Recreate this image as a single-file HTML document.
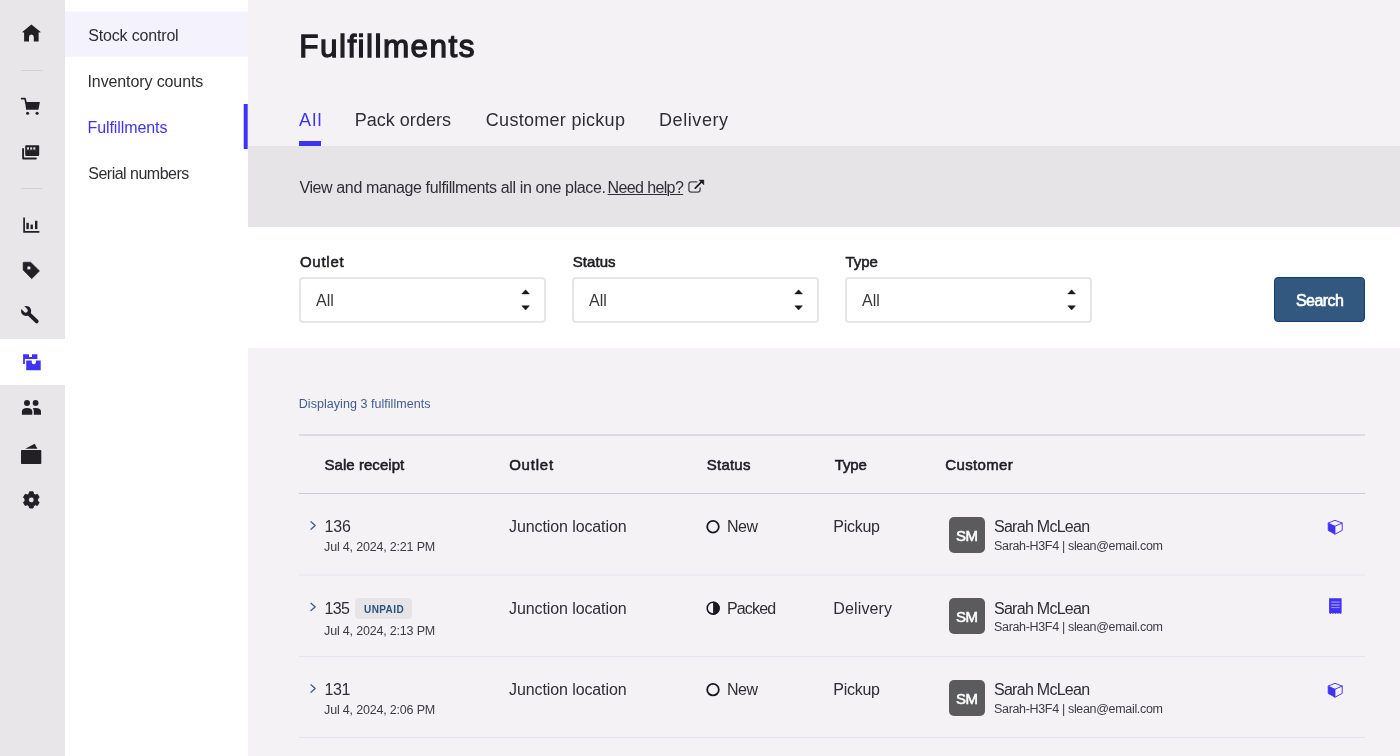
<!DOCTYPE html>
<html lang="en">
<head>
<meta charset="utf-8">
<title>Fulfillments</title>
<style>
*{box-sizing:border-box;margin:0;padding:0}
html,body{width:1400px;height:756px;overflow:hidden;background:#f4f2f5}
body{font-family:"Liberation Sans",sans-serif;color:#302e33;font-size:16px;position:relative}
.t{position:absolute;white-space:nowrap;display:block}
.n16{font-size:16px;line-height:20px}
.n18{font-size:18px;line-height:22px}
.n13{font-size:12.5px;line-height:16px}
.b15{font-size:15px;line-height:20px;color:#1e1c21;-webkit-text-stroke:0.55px #1e1c21}
.b16{font-size:16px;line-height:20px;color:#fff;-webkit-text-stroke:0.6px #fff}
.b15w{font-size:15px;line-height:20px;color:#fff;-webkit-text-stroke:0.55px #fff}
.b10{font-size:10px;line-height:12px;font-weight:bold}
.h1{font-size:31.5px;line-height:40px;font-weight:normal;color:#1e1c21;-webkit-text-stroke:1.3px #1e1c21}
svg{position:absolute;left:0;top:0;overflow:visible}
#rail{position:absolute;left:0;top:0;width:65px;height:756px;background:#e8e6e9}
#rail .sep{position:absolute;left:21px;width:21px;height:1px;background:#d2d0d4}
#rail .act{position:absolute;left:0;top:339px;width:65px;height:46px;background:#fff}
#nav{position:absolute;left:65px;top:0;width:183px;height:756px;background:#fff;will-change:transform}
#nav .hl{position:absolute;left:0;top:0;width:183px;height:45.4px;background:#f3f2fd;transform:translateY(11.6px)}
#nav .bar{position:absolute;left:0;top:104px;width:3.8px;height:45px;background:#3f32f5;transform:translateX(178.7px)}
#main{position:absolute;left:248px;top:0;width:1152px;height:756px;background:#f4f2f5;will-change:transform}
#tabline{position:absolute;left:51px;top:141px;width:22px;height:5px;background:#3f32f5}
#band{position:absolute;left:0;top:146px;width:1152px;height:81px;background:#e6e4e7}
#filters{position:absolute;left:0;top:227px;width:1152px;height:121px;background:#fff}
.sel{position:absolute;top:277px;width:247px;height:46px;border:2px solid #e7e5e9;border-radius:4px;background:#fff}
#search{position:absolute;left:1026px;top:277px;width:91px;height:45px;border-radius:4px;background:#335880;border:1px solid #123b72}
.hr{position:absolute;left:51px;width:1066px;height:1px;background:#cbc9cd}
.av{position:absolute;left:701px;width:36px;height:36px;border-radius:5px;background:#5b5a5c}
.badge{position:absolute;left:107px;top:598.4px;width:56.5px;height:20.3px;border-radius:4px;background:#e6e4e7}
u{text-decoration:underline;text-underline-offset:0.5px;text-decoration-thickness:1px}
</style>
</head>
<body>
<div id="rail">
<div class="sep" style="top:70px"></div>
<div class="sep" style="top:188px"></div>
<div class="act"></div>
<svg width="65" height="756" viewBox="0 0 65 756">
<g fill="#222025" stroke="none">
<path d="M31.4 24.6 L41 32.3 L38.6 32.6 V41.5 H33.8 V37 A2.4 2.5 0 0 0 29 37 V41.5 H24.1 V32.6 L21.9 32.3 Z"/>
<path d="M25.1 101.9 H39.9 L38.4 109.8 H26.1 Z"/>
<path d="M21.6 98.6 H25 L26 103" fill="none" stroke="#222025" stroke-width="1.7" stroke-linecap="round" stroke-linejoin="round"/>
<circle cx="27.6" cy="113.3" r="1.55"/><circle cx="37.1" cy="113.3" r="1.55"/>
<path d="M23.1 148.9 V158.5 H35.9" fill="none" stroke="#222025" stroke-width="1.9" stroke-linecap="round" stroke-linejoin="round"/>
<rect x="25.2" y="145.2" width="14" height="10.7" rx="0.8"/>
<g fill="#d9d7db"><rect x="26.9" y="147.3" width="2.1" height="2.3"/><rect x="30.1" y="147.3" width="2.1" height="2.3"/><rect x="33.3" y="147.3" width="2.1" height="2.3"/></g>
<rect x="26.6" y="150.3" width="10.4" height="0.5" fill="#3c3a3f"/>
<path d="M24.1 217.6 V231.8 H39.4" fill="none" stroke="#222025" stroke-width="1.7" stroke-linecap="butt" stroke-linejoin="miter"/>
<rect x="26.4" y="222.8" width="2.4" height="6.3"/><rect x="30.5" y="224.6" width="2.4" height="4.5"/><rect x="35" y="220.8" width="2.4" height="8.3"/>
<path fill-rule="evenodd" d="M23.5 262.2 H30.6 L39.5 270.9 L31.7 278.7 L23.1 270 V262.6 Z M28.9 265.95 a1.95 1.95 0 1 0 0.01 0 Z" stroke="#222025" stroke-width="0.6" stroke-linejoin="round"/>
<path fill-rule="evenodd" d="M26.1 305.9 a5.05 5.05 0 1 1 -0.01 0 Z" />
<path d="M36.7 321.4 L28.6 313.6" fill="none" stroke="#222025" stroke-width="3.9" stroke-linecap="round"/>
<path d="M25.7 310.5 L20.5 305.3" fill="none" stroke="#e8e6e9" stroke-width="4.1" stroke-linecap="round"/>
</g>
<g fill="#3f32f5">
<path d="M23.1 354.2 H29 V356.9 H32 V354.2 H37.4 V359 H24.9 V364.1 H23.1 Z"/>
<path d="M26.2 360.4 H31.7 V362.2 A2.1 2.1 0 0 0 35.9 362.2 V360.4 H40.7 V370.3 H26.2 Z"/>
</g>
<g fill="#222025">
<circle cx="27" cy="402.9" r="3"/><circle cx="35.6" cy="402.9" r="2.9"/>
<path d="M21.9 414.8 V411.6 Q21.9 407.9 27.1 407.9 Q32.3 407.9 32.3 411.6 V414.8 Z"/>
<path d="M33.8 414.8 V411.3 Q33.8 409.5 32.8 408.2 Q34 407.9 35.6 407.9 Q41 407.9 41 411.6 V414.8 Z"/>
<rect x="21" y="450" width="20.3" height="14" rx="0.8"/>
<path d="M25.2 448.7 L34.7 443.7 L37.4 448.7 Z"/>
<path fill-rule="evenodd" d="M33.59 493.93 L33.03 491.78 L29.57 491.78 L29.01 493.93 L27.27 494.93 L25.13 494.35 L23.41 497.34 L24.98 498.90 L24.98 500.90 L23.41 502.46 L25.13 505.45 L27.27 504.87 L29.01 505.87 L29.57 508.02 L33.03 508.02 L33.59 505.87 L35.33 504.87 L37.47 505.45 L39.19 502.46 L37.62 500.90 L37.62 498.90 L39.19 497.34 L37.47 494.35 L35.33 494.93Z M31.3 497.1 a2.8 2.8 0 1 0 0.01 0 Z" stroke="#222025" stroke-width="0.9" stroke-linejoin="round"/>
</g>
</svg>
</div>
<div id="nav">
<div class="hl"></div>
<div class="bar"></div>
<div class="t n16" style="left:23.30px;top:26.00px;letter-spacing:-0.177px;">Stock control</div>
<div class="t n16" style="left:22.50px;top:72.00px;letter-spacing:-0.107px;">Inventory counts</div>
<div class="t n16" style="left:22.50px;top:118.00px;letter-spacing:-0.091px;color:#3f32f5">Fulfillments</div>
<div class="t n16" style="left:23.30px;top:164.00px;letter-spacing:-0.508px;">Serial numbers</div>
</div>
<div id="main">
<h1 class="t h1" style="left:51.35px;top:26.40px;letter-spacing:1.433px;">Fulfillments</h1>
<div class="t n18" style="left:51.00px;top:109.00px;letter-spacing:1.198px;color:#3f32f5">All</div>
<div class="t n18" style="left:106.70px;top:109.00px;letter-spacing:0.026px;">Pack orders</div>
<div class="t n18" style="left:237.80px;top:109.00px;letter-spacing:0.290px;">Customer pickup</div>
<div class="t n18" style="left:411.00px;top:109.00px;letter-spacing:0.584px;">Delivery</div>
<div id="tabline"></div>
<div id="band"></div>
<div class="t n16" style="left:51.40px;top:178.00px;letter-spacing:-0.376px;">View and manage fulfillments all in one place.</div>
<u class="t n16" style="left:359.60px;top:178.00px;letter-spacing:-0.627px;">Need help?</u>
<div id="filters"></div>
<div class="t b15" style="left:51.88px;top:251.70px;letter-spacing:0.760px;">Outlet</div>
<div class="t b15" style="left:324.67px;top:251.70px;letter-spacing:0.085px;">Status</div>
<div class="t b15" style="left:597.38px;top:251.70px;letter-spacing:-0.042px;">Type</div>
<div class="sel" style="left:51px"></div>
<div class="sel" style="left:324px"></div>
<div class="sel" style="left:597px"></div>
<div class="t n16" style="left:67.90px;top:290.70px;letter-spacing:0.087px;color:#3a383d">All</div>
<div class="t n16" style="left:340.90px;top:290.70px;letter-spacing:0.087px;color:#3a383d">All</div>
<div class="t n16" style="left:613.90px;top:290.70px;letter-spacing:0.087px;color:#3a383d">All</div>
<div id="search"></div>
<div class="t b16" style="left:1048.00px;top:290.90px;letter-spacing:-0.559px;color:#fff">Search</div>
<div class="t n13" style="left:50.80px;top:396.00px;letter-spacing:0.043px;color:#3f5d8a">Displaying 3 fulfillments</div>
<div class="hr" style="top:434px;height:2px;background:#dddbdf"></div>
<div class="t b15" style="left:76.57px;top:455.40px;letter-spacing:0.037px;">Sale receipt</div>
<div class="t b15" style="left:261.17px;top:455.40px;letter-spacing:0.780px;">Outlet</div>
<div class="t b15" style="left:458.77px;top:455.40px;letter-spacing:0.225px;">Status</div>
<div class="t b15" style="left:586.77px;top:455.40px;letter-spacing:-0.142px;">Type</div>
<div class="t b15" style="left:697.27px;top:455.40px;letter-spacing:0.347px;">Customer</div>
<div class="hr" style="top:493px"></div>
<div class="t n16" style="left:76.40px;top:517.00px;letter-spacing:-0.148px;">136</div><div class="t n13" style="left:76.10px;top:539.00px;letter-spacing:-0.186px;color:#3e3c41">Jul 4, 2024, 2:21 PM</div><div class="t n16" style="left:261.10px;top:517.00px;letter-spacing:-0.106px;">Junction location</div><div class="t n16" style="left:479.00px;top:517.00px;letter-spacing:-0.477px;">New</div><div class="t n16" style="left:585.30px;top:517.00px;letter-spacing:-0.285px;">Pickup</div><div class="av" style="top:517.0px"><span class="t b15w" style="left:7.07px;top:8.50px;letter-spacing:-0.655px;color:#fff">SM</span></div><div class="t n16" style="left:746.00px;top:517.00px;letter-spacing:-0.724px;">Sarah McLean</div><div class="t n13" style="left:746.00px;top:538.00px;letter-spacing:-0.329px;color:#3e3c41">Sarah-H3F4 | slean@email.com</div>
<div class="hr" style="top:574px;height:2px;background:#eeecf0"></div>
<div class="badge"></div>
<div class="t b10" style="left:116.00px;top:603.80px;letter-spacing:0.406px;color:#2c4f7c">UNPAID</div>
<div class="t n16" style="left:76.40px;top:599.00px;letter-spacing:-0.548px;">135</div><div class="t n13" style="left:76.10px;top:622.50px;letter-spacing:-0.186px;color:#3e3c41">Jul 4, 2024, 2:13 PM</div><div class="t n16" style="left:261.10px;top:599.00px;letter-spacing:-0.106px;">Junction location</div><div class="t n16" style="left:479.00px;top:599.00px;letter-spacing:-0.854px;">Packed</div><div class="t n16" style="left:585.30px;top:599.00px;letter-spacing:0.130px;">Delivery</div><div class="av" style="top:598.4px"><span class="t b15w" style="left:7.07px;top:8.50px;letter-spacing:-0.655px;color:#fff">SM</span></div><div class="t n16" style="left:746.00px;top:599.00px;letter-spacing:-0.724px;">Sarah McLean</div><div class="t n13" style="left:746.00px;top:619.40px;letter-spacing:-0.329px;color:#3e3c41">Sarah-H3F4 | slean@email.com</div>
<div class="hr" style="top:656px;background:#e6e4e8"></div>
<div class="t n16" style="left:76.40px;top:680.00px;letter-spacing:-0.298px;">131</div><div class="t n13" style="left:76.10px;top:701.80px;letter-spacing:-0.186px;color:#3e3c41">Jul 4, 2024, 2:06 PM</div><div class="t n16" style="left:261.10px;top:680.00px;letter-spacing:-0.106px;">Junction location</div><div class="t n16" style="left:479.00px;top:680.00px;letter-spacing:-0.477px;">New</div><div class="t n16" style="left:585.30px;top:680.00px;letter-spacing:-0.285px;">Pickup</div><div class="av" style="top:680.0px"><span class="t b15w" style="left:7.07px;top:8.50px;letter-spacing:-0.655px;color:#fff">SM</span></div><div class="t n16" style="left:746.00px;top:680.00px;letter-spacing:-0.724px;">Sarah McLean</div><div class="t n13" style="left:746.00px;top:701.00px;letter-spacing:-0.329px;color:#3e3c41">Sarah-H3F4 | slean@email.com</div>
<div class="hr" style="top:737px;background:#e6e4e8"></div>
<svg width="1152" height="756" viewBox="248 0 1152 756">
<path d="M696.9 181.8 H691.3 A2.4 2.4 0 0 0 688.9 184.2 V189.7 A2.4 2.4 0 0 0 691.3 192.1 H697.7 A2.4 2.4 0 0 0 700.1 189.7 V187.9" fill="none" stroke="#47454a" stroke-width="1.3" stroke-linecap="round"/>
<path d="M695.3 188.2 L702 181.4" fill="none" stroke="#1b191e" stroke-width="1.7" stroke-linecap="round"/>
<path d="M699 180 H703.9 V184.9 Z" fill="#1b191e" stroke="#1b191e" stroke-width="0.4" stroke-linejoin="round"/>
<path d="M521.8 293.9 H529.4 L525.6 289.8 Z M521.8 305.8 H529.4 L525.6 310 Z" fill="#1b191e" stroke="#1b191e" stroke-width="0.5" stroke-linejoin="round"/><path d="M794.8 293.9 H802.4 L798.6 289.8 Z M794.8 305.8 H802.4 L798.6 310 Z" fill="#1b191e" stroke="#1b191e" stroke-width="0.5" stroke-linejoin="round"/><path d="M1067.8 293.9 H1075.4 L1071.6 289.8 Z M1067.8 305.8 H1075.4 L1071.6 310 Z" fill="#1b191e" stroke="#1b191e" stroke-width="0.5" stroke-linejoin="round"/>
<path d="M311 521.8 L315.2 525.5 L311 529.2" fill="none" stroke="#3f5f8d" stroke-width="1.3" stroke-linecap="round" stroke-linejoin="round"/><path d="M311 603.2 L315.2 606.9 L311 610.6" fill="none" stroke="#3f5f8d" stroke-width="1.3" stroke-linecap="round" stroke-linejoin="round"/><path d="M311 684.8 L315.2 688.5 L311 692.2" fill="none" stroke="#3f5f8d" stroke-width="1.3" stroke-linecap="round" stroke-linejoin="round"/>
<circle cx="713" cy="526.75" r="5.8" fill="none" stroke="#1b191e" stroke-width="1.8"/>
<circle cx="713" cy="689.65" r="5.8" fill="none" stroke="#1b191e" stroke-width="1.8"/>
<circle cx="713.1" cy="608.2" r="5.9" fill="none" stroke="#1b191e" stroke-width="1.6"/>
<path d="M713.1 601.6 A6.6 6.6 0 0 1 713.1 614.8 Z" fill="#1b191e"/>
<path d="M1328.2 523.1 L1335.0 526.2 V534.2 L1328.2 530.4 Z" fill="#3f32f5" stroke="#3f32f5" stroke-width="0.8" stroke-linejoin="round"/><path d="M1328.2 523.1 L1335.0 520.3 L1342.2 523.1 L1335.0 526.2 M1342.2 523.1 V530.4 L1335.0 534.2" fill="none" stroke="#3f32f5" stroke-width="0.95" stroke-linejoin="round" stroke-linecap="round"/><path d="M1329.1 598.3 H1341.6 V613.1 L1340.35 614.00 L1339.10 613.10 L1337.85 614.00 L1336.60 613.10 L1335.35 614.00 L1334.10 613.10 L1332.85 614.00 L1331.60 613.10 L1330.35 614.00 L1329.10 613.10 Z" fill="#3f32f5"/><g fill="#aaa5fb"><rect x="1331.1" y="601.5" width="8.6" height="1.1"/><rect x="1331.1" y="604.4" width="8.6" height="1.1"/><rect x="1331.1" y="607.2" width="8.6" height="0.9"/></g><path d="M1328.2 686.1 L1335.0 689.2 V697.2 L1328.2 693.4 Z" fill="#3f32f5" stroke="#3f32f5" stroke-width="0.8" stroke-linejoin="round"/><path d="M1328.2 686.1 L1335.0 683.3 L1342.2 686.1 L1335.0 689.2 M1342.2 686.1 V693.4 L1335.0 697.2" fill="none" stroke="#3f32f5" stroke-width="0.95" stroke-linejoin="round" stroke-linecap="round"/>
</svg>
</div>
</body>
</html>
